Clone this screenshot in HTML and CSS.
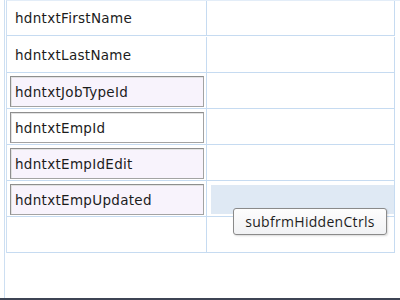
FILE: index.html
```html
<!DOCTYPE html>
<html lang="en">
<head>
  <meta charset="UTF-8" />
  <title>Hidden controls</title>
  <link rel="stylesheet" href="styles.css">
</head>
<body>
  <div class="frame">
    <div class="grid">
      <div class="cell name"><span>hdntxtFirstName</span></div>
      <div class="cell"></div>
      <div class="cell name"><span>hdntxtLastName</span></div>
      <div class="cell"></div>
      <div class="cell field"><input type="text" class="tint" value="hdntxtJobTypeId"></div>
      <div class="cell"></div>
      <div class="cell field"><input type="text" value="hdntxtEmpId"></div>
      <div class="cell"></div>
      <div class="cell field"><input type="text" class="tint" value="hdntxtEmpIdEdit"></div>
      <div class="cell"></div>
      <div class="cell field"><input type="text" class="tint" value="hdntxtEmpUpdated"></div>
      <div class="cell sub"><div class="sub-area"></div></div>
      <div class="cell"></div>
      <div class="cell"></div>
    </div>
    <div class="tip">subfrmHiddenCtrls</div>
  </div>
  <div class="bottom-line"></div>
</body>
</html>
```

FILE: styles.css
```css
* { box-sizing: border-box; }
body { margin: 0; background: #fff; font-family: 'DejaVu Sans', Verdana, sans-serif; color: #1c1c1c; }
.frame { position: relative; height: 298px; margin-left: 4px; padding-left: 1px; border-left: 1px solid #cddff2; }
.grid { display: grid; grid-template-columns: 200px 188px; grid-auto-rows: 36px; border-left: 1px solid #cddff2; border-top: 1px solid #e3edf8; }
.grid .cell:nth-child(1), .grid .cell:nth-child(2) { height: 35px; }
.cell { border-right: 1px solid #c6dbf1; border-bottom: 1px solid #c6dbf1; }
.name { display: flex; align-items: center; padding-left: 8px; font-size: 13.5px; letter-spacing: 0.3px; }
.field { padding: 3px 1px 1px 3px; }
.field input { display: block; width: 194px; height: 31px; margin: 0; padding: 0 4px; border: 1px solid #a3a3a3; border-top-color: #8e8e8e; border-left-color: #8e8e8e; box-shadow: inset 1px 1px 0 #e2e2e2; background: #fff; font-family: inherit; font-size: 13.5px; letter-spacing: 0.3px; color: #1c1c1c; outline: none; }
.field input.tint { background: #f8f3fc; }
.sub { padding: 4px 0 2px 4px; }
.sub-area { height: 100%; background: #dfe9f4; }
.tip { position: absolute; left: 228px; top: 208px; width: 154px; height: 27px; display: flex; align-items: center; justify-content: center; border: 1px solid #8a8a8a; border-radius: 3px; background: linear-gradient(#fdfdfd, #f1f2f4); box-shadow: 1px 1px 2px rgba(0,0,0,0.15); font-family: 'Open Sans', 'Noto Sans', sans-serif; font-size: 14px; letter-spacing: 0.3px; color: #1e1e1e; }
.bottom-line { height: 2px; background: #3d4454; }
```
